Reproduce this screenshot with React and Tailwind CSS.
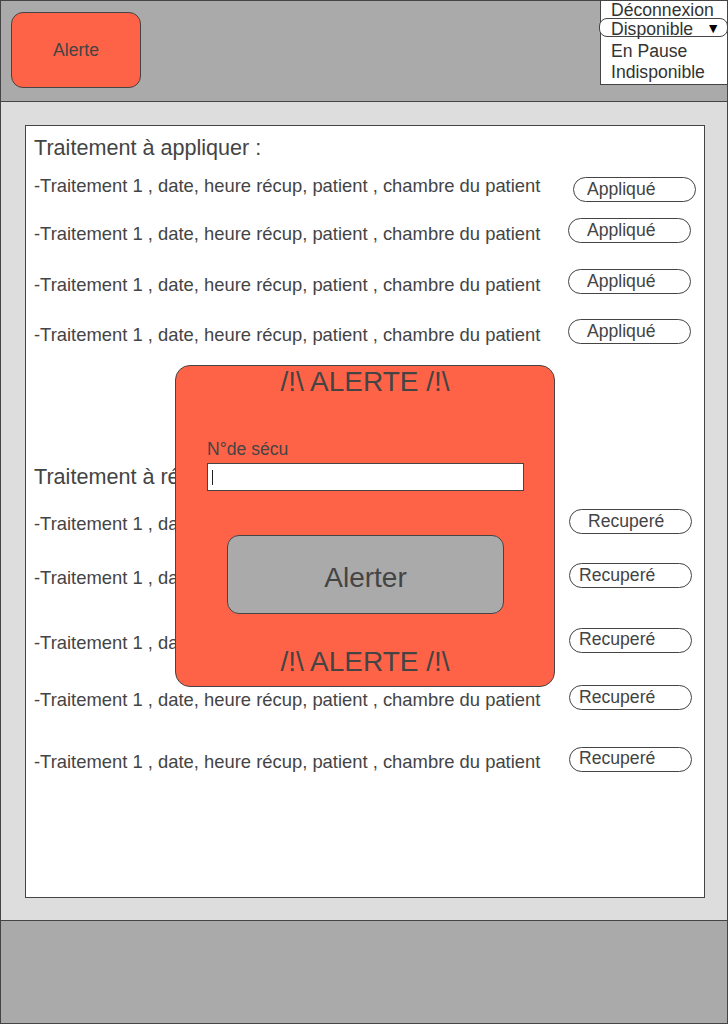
import React from 'react';

const rowText = '-Traitement 1 , date, heure récup, patient , chambre du patient';

// section "à appliquer" rows, spacing taken from the mockup
const appliedRows = [
    { mt: 'mt-[16px]', textMt: '-mt-px', btn: 'mr-[8px] pl-[13px]' },
    { mt: 'mt-[16px]', textMt: 'mt-[6px]', btn: 'mr-[13px] pl-[18px]' },
    { mt: 'mt-[26px]', textMt: 'mt-[6px]', btn: 'mr-[13px] pl-[18px]' },
    { mt: 'mt-[25px]', textMt: 'mt-[6px]', btn: 'mr-[13px] pl-[18px]' },
];

const pickedRows = [
    { mt: 'mt-[19px]', btn: 'pl-[18px] pt-px' },
    { mt: 'mt-[29px]', btn: 'pl-[9px] pt-px' },
    { mt: 'mt-[40px]', btn: 'pl-[9px] pt-0' },
    { mt: 'mt-[32px]', btn: 'pl-[9px] pt-px' },
    { mt: 'mt-[37px]', btn: 'pl-[9px] pt-0' },
];

const Row = ({ textMt, btn, label, mt }) => (
    <div className={`flex justify-between items-start h-[25px] ${mt}`}>
        <span className={`text-[18.4px] leading-[20px] whitespace-nowrap ${textMt}`}>{rowText}</span>
        <div className={`w-[123px] h-[25px] border border-[#444] rounded-full bg-white text-[17.6px] leading-[21px] ${btn}`}>
            {label}
        </div>
    </div>
);

const App = () => {
    return (
        <div className="relative w-[728px] h-[1024px] text-[#444] font-['Liberation_Sans',Arial,sans-serif]">
            {/* Header */}
            <div className="relative h-[102px] border border-[#444] bg-[#aaaaaa]">
                <div className="ml-[10px] mt-[11px] w-[130px] h-[76px] rounded-[12px] border border-[#444] bg-[#ff6347] flex items-center justify-center text-[17.6px]">
                    Alerte
                </div>

                {/* status menu */}
                <div className="absolute -top-px -right-px w-[128px] h-[85px] border border-[#444] bg-white text-[#333] text-[17.6px] leading-[20px]">
                    <div className="pl-[10px] -mt-px">Déconnexion</div>
                    <div className="-ml-[2px] -mr-px mt-[-2px] h-[19px] rounded-[8px] border border-[#444] bg-white flex items-center justify-between pl-[11px] pr-[7px]">
                        <span className="leading-[18px] mt-[3px]">Disponible</span>
                        <span className="text-[14px] leading-[14px] text-black">▼</span>
                    </div>
                    <div className="pl-[10px] mt-[4px]">En Pause</div>
                    <div className="pl-[10px] mt-[1px]">Indisponible</div>
                </div>
            </div>

            {/* Main */}
            <div className="h-[818px] border-x border-[#444] bg-[#dddddd] pt-[23px] pl-[24px]">
                <div className="w-[680px] h-[773px] border border-[#444] bg-white pl-[8px] pt-[9px]">
                    <div className="text-[21.6px] leading-[26px]">Traitement à appliquer :</div>
                    {appliedRows.map((r, i) => (
                        <Row key={i} mt={r.mt} textMt={r.textMt} btn={`${r.btn} pt-px`} label="Appliqué" />
                    ))}

                    <div className="mt-[120px] text-[21.6px] leading-[26px]">Traitement à récupérer :</div>
                    {pickedRows.map((r, i) => (
                        <Row key={i} mt={r.mt} textMt="mt-[5px]" btn={`mr-[12px] ${r.btn}`} label="Recuperé" />
                    ))}
                </div>
            </div>

            {/* Footer */}
            <div className="h-[104px] border border-[#444] bg-[#aaaaaa]"></div>

            {/* Alert popup */}
            <div className="absolute left-[175px] top-[365px] w-[380px] h-[322px] rounded-[15px] border border-[#444] bg-[#ff6347]">
                <div className="text-center text-[28px] leading-[32px]">/!\ ALERTE /!\</div>
                <div className="mt-[40px] pl-[31px] text-[17.6px] leading-[22px]">N°de sécu</div>
                <div className="mt-[3px] ml-[31px] w-[317px] h-[28px] border border-[#444] bg-white flex items-center pl-[4px]">
                    <div className="w-px h-[15px] bg-[#222]"></div>
                </div>
                <div className="mt-[44px] ml-[51px] w-[277px] h-[79px] rounded-[12px] border border-[#444] bg-[#aaaaaa] flex items-center justify-center text-[28px] pt-[6px]">
                    Alerter
                </div>
                <div className="mt-[32px] text-center text-[28px] leading-[32px]">/!\ ALERTE /!\</div>
            </div>
        </div>
    );
};

export default App;
